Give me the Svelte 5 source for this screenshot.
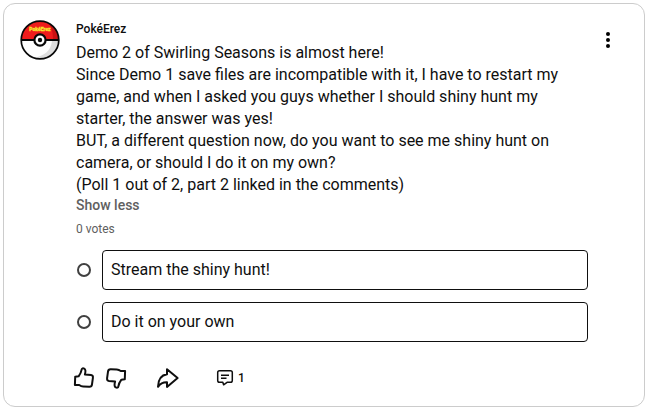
<script>
	let post = {
		author: "PokéErez",
		text: `Demo 2 of Swirling Seasons is almost here!
Since Demo 1 save files are incompatible with it, I have to restart my game, and when I asked you guys whether I should shiny hunt my starter, the answer was yes!
BUT, a different question now, do you want to see me shiny hunt on camera, or should I do it on my own?
(Poll 1 out of 2, part 2 linked in the comments)`,
		votes: 0,
		comments: 1,
		options: ["Stream the shiny hunt!", "Do it on your own"],
	};

	let selected = $state(null);
	let expanded = $state(true);

	const thumb =
		"M3.2 10.8 L6.6 10.3 C8.2 8.2 9.2 6.2 9.7 3.4 C9.9 2.3 11 2 12.2 2.6 C13.8 3.4 13.9 4.9 12.9 8.6 L19 9.1 C20.6 9.3 21.1 10.2 20.9 11.8 L20 18.4 C19.8 20.2 18.8 20.9 17.2 20.8 L11.2 20.5 C9.6 20.4 8.6 20 7.2 19 L2.9 19 Z";
</script>

<article class="post">
	<a class="avatar" href="#channel" aria-label={post.author}>
		<svg viewBox="0 0 40 40">
			<circle cx="20" cy="20" r="18.8" fill="#fdfdfd" />
			<path d="M32 21 H38.5 A18.8 18.8 0 0 1 14 37.8 C24 36 31 31 32 21 Z" fill="#dedede" />
			<path d="M1.2 20 A18.8 18.8 0 0 1 38.8 20 Z" fill="#ee1c1c" />
			<path d="M29 4 A18.8 18.8 0 0 1 38.8 20 H33 C33 13 32 8 29 4 Z" fill="#c91212" />
			<path d="M1 20 H39" stroke="#080808" stroke-width="2" />
			<circle cx="20" cy="20" r="18.8" fill="none" stroke="#080808" stroke-width="1.7" />
			<circle cx="20" cy="20" r="5.6" fill="#fff" stroke="#080808" stroke-width="2.2" />
			<circle cx="20" cy="20" r="2.2" fill="#080808" />
			<text class="logo-text" x="20" y="11" text-anchor="middle">PokéErez</text>
		</svg>
	</a>

	<div class="content">
		<a class="author" href="#channel">{post.author}</a>
		<p class="text" class:collapsed={!expanded}>{post.text}</p>
		<button class="toggle" onclick={() => (expanded = !expanded)}>
			{expanded ? "Show less" : "Read more"}
		</button>
		<div class="votes">{post.votes} votes</div>

		<div class="poll" role="radiogroup" aria-label="Poll">
			{#each post.options as option, i}
				<label class="option">
					<input type="radio" name="poll" value={i} bind:group={selected} />
					<span class="option-text">{option}</span>
				</label>
			{/each}
		</div>

		<div class="actions">
			<button class="action" aria-label="Like">
				<svg class="icon" viewBox="0 0 24 24"><path d={thumb} /></svg>
			</button>
			<button class="action" aria-label="Dislike">
				<svg class="icon flipped" viewBox="0 0 24 24"><path d={thumb} /></svg>
			</button>
			<button class="action share" aria-label="Share">
				<svg class="icon" viewBox="0 0 24 24">
					<path d="M11 3.2 L21.6 12 L11 20.9 V16.2 C7 16 4.4 17.4 2 20.8 C2.2 13.2 5.4 9 11 8.2 Z" />
				</svg>
			</button>
			<a class="comments" href="#comments" aria-label="Comments">
				<svg viewBox="0 0 18 18">
					<path d="M3.5 1.8 H14.5 Q16.3 1.8 16.3 3.6 V11.4 Q16.3 13.2 14.5 13.2 H11.4 L7.6 15.8 L6.8 13.2 H3.5 Q1.7 13.2 1.7 11.4 V3.6 Q1.7 1.8 3.5 1.8 Z" />
					<path d="M5 6.2 H13 M5 9.2 H10.5" />
				</svg>
				<span>{post.comments}</span>
			</a>
		</div>
	</div>

	<button class="menu" aria-label="More actions">
		<svg viewBox="0 0 24 24">
			<circle cx="12" cy="6" r="2" />
			<circle cx="12" cy="12" r="2" />
			<circle cx="12" cy="18" r="2" />
		</svg>
	</button>
</article>

<style>
	:global(body) {
		margin: 0;
		background: #fff;
	}

	.post {
		display: flex;
		align-items: flex-start;
		margin: 3px 4px 4px 3px;
		padding: 16px 16px 10px;
		border: 1px solid #ccc;
		border-radius: 12px;
		color: #0f0f0f;
		font-family: Roboto, Arial, sans-serif;
	}

	button {
		padding: 0;
		border: none;
		background: none;
		color: inherit;
		font-family: inherit;
		cursor: pointer;
	}

	a {
		color: inherit;
		text-decoration: none;
	}

	svg {
		display: block;
	}

	.avatar {
		flex: none;
		width: 40px;
		height: 40px;
		margin-right: 16px;
	}

	.logo-text {
		fill: #f7e32b;
		font-size: 5px;
		font-weight: 900;
		stroke: #f7e32b;
		stroke-width: 0.3;
	}

	.content {
		display: flex;
		flex: 1;
		flex-direction: column;
		align-items: flex-start;
		min-width: 0;
	}

	.author {
		font-size: 12px;
		font-weight: 500;
		line-height: 18px;
	}

	.text {
		margin: 4px 0 0;
		font-size: 16px;
		line-height: 22px;
		white-space: pre-line;
	}

	.text.collapsed {
		max-height: 88px;
		overflow: hidden;
	}

	.toggle {
		color: #606060;
		font-size: 14px;
		font-weight: 500;
		line-height: 18px;
	}

	.votes {
		margin-top: 6px;
		color: #606060;
		font-size: 12px;
		line-height: 18px;
	}

	.poll {
		display: flex;
		flex-direction: column;
		gap: 12px;
		width: 100%;
		margin-top: 12px;
	}

	.option {
		display: flex;
		align-items: center;
		gap: 11px;
		cursor: pointer;
	}

	.option input {
		appearance: none;
		flex: none;
		box-sizing: border-box;
		width: 14px;
		height: 14px;
		margin: 0 0 0 1px;
		border: 2px solid #404040;
		border-radius: 50%;
	}

	.option input:checked {
		border-width: 4px;
	}

	.option-text {
		flex: 1;
		padding: 8px;
		border: 1px solid #0f0f0f;
		border-radius: 4px;
		font-size: 16px;
		line-height: 22px;
	}

	.actions {
		display: flex;
		align-items: center;
		margin: 18px 0 0 -8px;
	}

	.action {
		display: flex;
		align-items: center;
		justify-content: center;
		width: 32px;
		height: 36px;
	}

	.share {
		margin-left: 20px;
	}

	.icon {
		width: 24px;
		height: 24px;
		fill: none;
		stroke: #0f0f0f;
		stroke-width: 2;
		stroke-linejoin: round;
	}

	.flipped {
		transform: rotate(180deg);
	}

	.comments {
		display: flex;
		align-items: center;
		gap: 4px;
		margin-left: 32px;
		font-size: 12px;
		font-weight: 500;
		line-height: 18px;
	}

	.comments svg {
		width: 18px;
		height: 18px;
		fill: none;
		stroke: #0f0f0f;
		stroke-width: 1.5;
		stroke-linejoin: round;
	}

	.menu {
		flex: none;
		width: 40px;
		height: 40px;
	}

	.menu svg {
		width: 24px;
		height: 24px;
		margin: 0 auto;
	}
</style>
